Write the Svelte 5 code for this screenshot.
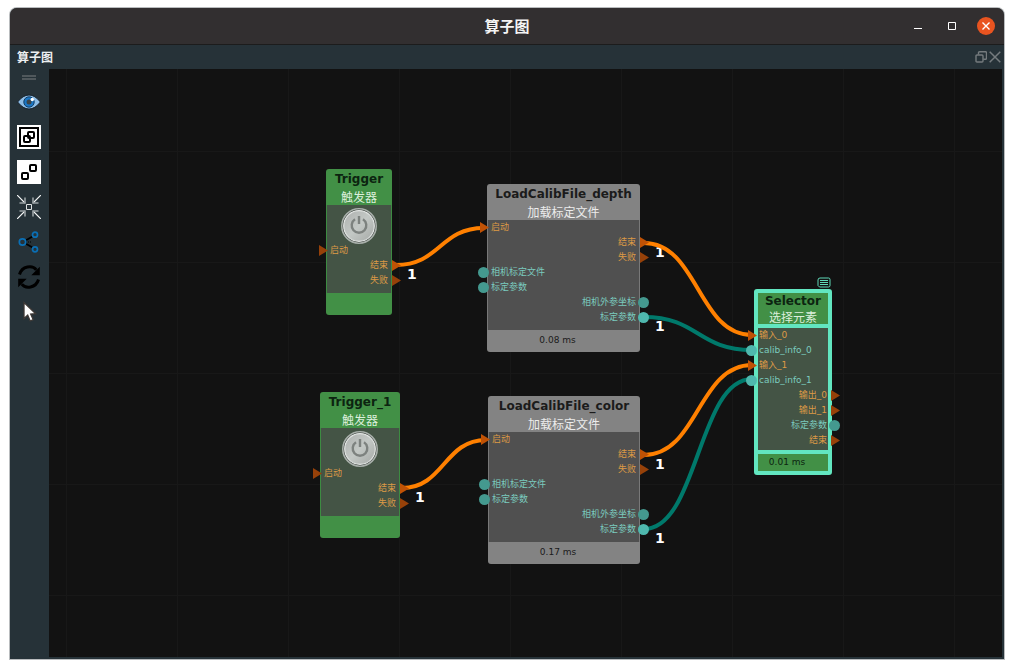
<script>
	// positions are in canvas coordinates
	const nodes = [
		{
			id: 'trigger', title: 'Trigger', subtitle: '触发器', kind: 'green', x: 277, y: 100, width: 66, button: true, time: '',
			ports: [
				{ label: '启动', side: 'in', type: 'flow' },
				{ label: '结束', side: 'out', type: 'flow', linked: true },
				{ label: '失败', side: 'out', type: 'flow' }
			]
		},
		{
			id: 'trigger_1', title: 'Trigger_1', subtitle: '触发器', kind: 'green', x: 271, y: 323, width: 80, button: true, time: '',
			ports: [
				{ label: '启动', side: 'in', type: 'flow' },
				{ label: '结束', side: 'out', type: 'flow', linked: true },
				{ label: '失败', side: 'out', type: 'flow' }
			]
		},
		{
			id: 'depth', title: 'LoadCalibFile_depth', subtitle: '加载标定文件', kind: 'grey', x: 438, y: 115, width: 153, time: '0.08 ms',
			ports: loadPorts()
		},
		{
			id: 'color', title: 'LoadCalibFile_color', subtitle: '加载标定文件', kind: 'grey', x: 439, y: 327, width: 152, time: '0.17 ms',
			ports: loadPorts()
		},
		{
			id: 'selector', title: 'Selector', subtitle: '选择元素', kind: 'green', selected: true, x: 705, y: 220, width: 78, time: '0.01 ms',
			ports: [
				{ label: '输入_0', side: 'in', type: 'flow', linked: true },
				{ label: 'calib_info_0', side: 'in', type: 'data', linked: true },
				{ label: '输入_1', side: 'in', type: 'flow', linked: true },
				{ label: 'calib_info_1', side: 'in', type: 'data', linked: true },
				{ label: '输出_0', side: 'out', type: 'flow' },
				{ label: '输出_1', side: 'out', type: 'flow' },
				{ label: '标定参数', side: 'out', type: 'data' },
				{ label: '结束', side: 'out', type: 'flow' }
			]
		}
	];

	const wires = [
		{ from: [347, 196], to: [435, 159], type: 'flow' },
		{ from: [353, 419], to: [437, 371], type: 'flow' },
		{ from: [595, 174], to: [703, 266], type: 'flow' },
		{ from: [595, 248], to: [703, 281], type: 'data' },
		{ from: [595, 386], to: [703, 296], type: 'flow' },
		{ from: [595, 460], to: [703, 310], type: 'data' }
	];

	const counts = [[358, 210], [366, 433], [606, 188], [606, 262], [606, 400], [606, 474]];

	function loadPorts() {
		return [
			{ label: '启动', side: 'in', type: 'flow', linked: true },
			{ label: '结束', side: 'out', type: 'flow', linked: true },
			{ label: '失败', side: 'out', type: 'flow' },
			{ label: '相机标定文件', side: 'in', type: 'data' },
			{ label: '标定参数', side: 'in', type: 'data' },
			{ label: '相机外参坐标', side: 'out', type: 'data' },
			{ label: '标定参数', side: 'out', type: 'data', linked: true }
		];
	}

	function curve({ from, to }) {
		const mid = (from[0] + to[0]) / 2;
		return `M${from[0]} ${from[1]} C${mid} ${from[1]} ${mid} ${to[1]} ${to[0]} ${to[1]}`;
	}
</script>

<div class="desktop">
	<main class="window">
		<header class="titlebar">
			<h1>算子图</h1>
			<div class="titlebar__buttons">
				<button aria-label="minimize">
					<svg width="18" height="18"><path d="M5 11.5h8" stroke="#fff" /></svg>
				</button>
				<button aria-label="maximize">
					<svg width="18" height="18"><path d="M5.5 5.5h7v7h-7z" fill="none" stroke="#fff" /></svg>
				</button>
				<button aria-label="close">
					<svg width="18" height="18">
						<circle cx="9" cy="9" r="9" fill="#e95420" />
						<path d="M5.500 5.500l7 7m0-7l-7 7" stroke="#fff" stroke-width="1.400" />
					</svg>
				</button>
			</div>
		</header>

		<div class="dock">
			<h2>算子图</h2>
			<div class="dock__buttons">
				<button aria-label="float">
					<svg width="12" height="12" fill="none" stroke="#757b7e" stroke-width="1.400">
						<path d="M3.500 3.500V1.700q0-1 1-1h6q1 0 1 1v5.600q0 1-1 1H8.300" />
						<path d="M1 5q0-1 1-1h5q1 0 1 1v5q0 1-1 1H2q-1 0-1-1z" />
					</svg>
				</button>
				<button aria-label="close dock">
					<svg width="12" height="12" stroke="#757b7e" stroke-width="1.500"><path d="M.7.7l10.600 10.600m0-10.600L.7 11.300" /></svg>
				</button>
			</div>
		</div>

		<div class="workspace">
			<nav class="toolbar">
				<div class="toolbar__handle"></div>
				<button aria-label="view">
					<svg width="24" height="24">
						<path d="M.6 12Q6 5 12 5T23.400 12Q18 19 12 19T.6 12z" fill="#8dbde6" stroke="#17212a" />
						<circle cx="12" cy="12" r="5.200" fill="#1976c5" stroke="#123e66" />
						<circle cx="12" cy="12" r="2.500" fill="#3c4448" />
						<circle cx="15.300" cy="9.500" r="1.700" fill="#fff" />
					</svg>
				</button>
				<button aria-label="group">
					<svg width="24" height="24" fill="none" stroke="#000">
						<path d="M0 0h24v24H0z" fill="#fff" stroke="none" />
						<path d="M3 3h18v18H3z" stroke-width="2" />
						<rect x="11" y="7" width="6" height="6" rx="1" stroke-width="2" />
						<rect x="7" y="11" width="6" height="6" rx="1" stroke-width="2" />
					</svg>
				</button>
				<button aria-label="ungroup">
					<svg width="24" height="24" fill="none" stroke="#000">
						<path d="M0 0h24v24H0z" fill="#fff" stroke="none" />
						<rect x="13" y="5" width="6" height="6" rx="1" stroke-width="2" />
						<rect x="5" y="13" width="6" height="6" rx="1" stroke-width="2" />
					</svg>
				</button>
				<button aria-label="center">
					<svg width="24" height="24" fill="none">
						<path d="M0 0l8 8M24 0l-8 8M0 24l8-8M24 24l-8-8" stroke="#f3f5f5" stroke-width="1.200" />
						<path d="M2.500 8h5.500V2.500M21.500 8H16V2.500M2.500 16h5.500v5.500M21.500 16H16v5.500" stroke="#9ba2a5" stroke-width="1.600" />
						<path d="M9.500 9.500h5v5h-5z" stroke="#dfe2e3" />
					</svg>
				</button>
				<button aria-label="share">
					<svg width="24" height="24" fill="none">
						<path d="M8.500 10.500L15.500 6.500M8.500 13.500L15.500 17.500" stroke="#000" stroke-width="1.800" />
						<path d="M9 12h5" stroke="#000" stroke-dasharray="1 1" />
						<circle cx="5.500" cy="12" r="3.200" stroke="#0a6fb5" stroke-width="1.700" />
						<circle cx="18" cy="4.700" r="2.500" stroke="#0a6fb5" stroke-width="1.700" />
						<circle cx="18" cy="19.300" r="2.500" stroke="#0a6fb5" stroke-width="1.700" />
					</svg>
				</button>
				<button aria-label="refresh">
					<svg width="24" height="24">
						<path d="M2.500 9.500C5 .8 15.500-.2 19.300 4.800M21.500 14.500C19 23.200 8.500 24.200 4.700 19.200" fill="none" stroke="#000" stroke-width="3" />
						<path d="M22.800 1.800v8.500h-8.500zM1.200 22.200v-8.500h8.500z" />
					</svg>
				</button>
				<button aria-label="select">
					<svg width="24" height="24">
						<path d="M7 2.500v16l3.700-3.300 2.500 5.800 3-1.300-2.500-5.600 5-.4z" fill="#fff" stroke="#3d3835" stroke-width="1.300" />
					</svg>
				</button>
			</nav>

			<section class="canvas">
				<svg class="wires" width="100%" height="100%">
					{#each counts as [x, y]}
						<text {x} {y}>1</text>
					{/each}
					{#each wires as wire}
						<path class={wire.type} d={curve(wire)} />
					{/each}
				</svg>

				{#each nodes as node (node.id)}
					<article
						class="node node--{node.kind}"
						class:node--selected={node.selected}
						style="left: {node.x}px; top: {node.y}px; width: {node.width}px"
					>
						{#if node.selected}
							<svg class="node__badge" width="14" height="12" fill="none" stroke="#5fd9b8">
								<path d="M3 1h8.500q1.500 0 1.500 1.500v6q0 1.500-1.500 1.500h-9L1 8.500V3q0-2 2-2z" />
								<path d="M3 3.500h8M3 5.500h8M3 7.500h8" />
							</svg>
						{/if}
						<div class="node__header">
							<h3>{node.title}</h3>
							<p>{node.subtitle}</p>
						</div>
						<div class="node__body">
							{#if node.button}
								<button class="power" aria-label="run {node.title}">
									<svg width="36" height="36" fill="none">
										<defs>
											<linearGradient id="metal-{node.id}" x1="0" y1="0" x2="1" y2="1">
												<stop offset="0" stop-color="#aeb1af" />
												<stop offset=".5" stop-color="#c3c8c5" />
												<stop offset="1" stop-color="#a5a9a6" />
											</linearGradient>
										</defs>
										<circle cx="18" cy="18" r="17.200" fill="#2e3530" stroke="#a9b0ab" stroke-width="1.600" />
										<circle cx="18" cy="18" r="15.300" fill="url(#metal-{node.id})" stroke="#e4e7e5" stroke-width="1.200" />
										<path d="M14 11.300a7.300 7.300 0 1 0 8 0M18 8v8" stroke="#7d827f" stroke-width="2.400" />
									</svg>
								</button>
							{/if}
							{#each node.ports as port}
								<div class="port port--{port.side} port--{port.type}" class:port--linked={port.linked}>
									<span>{port.label}</span>
									<i></i>
								</div>
							{/each}
						</div>
						<div class="node__footer">{node.time}</div>
					</article>
				{/each}
			</section>
		</div>
	</main>
</div>

<style>
	:global(body) {
		margin: 0;
		background: #fff;
	}

	.desktop {
		box-sizing: border-box;
		height: 100vh;
		padding: 8px 10px 10px;
		font-family: "DejaVu Sans", "Noto Sans CJK SC", sans-serif;
	}

	.window {
		display: flex;
		flex-direction: column;
		height: 100%;
		border-radius: 7px 7px 0 0;
		overflow: hidden;
		background: #263238;
		box-shadow: 0 0 0 1px #b9bcbe;
	}

	h1, h2, h3, p {
		margin: 0;
	}

	button {
		display: block;
		padding: 0;
		border: 0;
		background: none;
	}

	svg {
		display: block;
	}

	.titlebar {
		display: grid;
		grid-template-columns: 1fr auto 1fr;
		align-items: center;
		height: 36px;
		border-bottom: 1px solid #1c1c1c;
		background: #322f30;
		color: #f4f4f4;
	}

	.titlebar h1 {
		grid-column: 2;
		font: bold 15px/36px "Noto Sans CJK SC", sans-serif;
	}

	.titlebar__buttons {
		display: flex;
		justify-content: flex-end;
		gap: 16px;
		padding-right: 9px;
	}

	.dock {
		display: flex;
		align-items: center;
		justify-content: space-between;
		height: 24px;
		padding: 0 3px 0 7px;
		color: #eceff1;
	}

	.dock h2 {
		font: bold 12px/24px "Noto Sans CJK SC", sans-serif;
	}

	.dock__buttons {
		display: flex;
		gap: 2px;
	}

	.workspace {
		display: flex;
		flex: 1;
		min-height: 0;
		padding: 0 2px 2px 0;
	}

	.toolbar {
		display: flex;
		flex-direction: column;
		align-items: center;
		gap: 11px;
		width: 38px;
		padding: 6px 1px 0 0;
	}

	.toolbar__handle {
		width: 14px;
		height: 1px;
		margin-bottom: -1px;
		border-top: 2px solid #50585c;
		border-bottom: 2px solid #50585c;
	}

	.canvas {
		position: relative;
		flex: 1;
		overflow: hidden;
		background-color: #121212;
		background-image:
			linear-gradient(90deg, #181818 1px, transparent 1px),
			linear-gradient(#181818 1px, transparent 1px);
		background-size: 111px 111px;
		background-position: 17px 82px;
	}

	.wires {
		position: absolute;
		left: 0;
		top: 0;
	}

	.wires path {
		fill: none;
		stroke-width: 4;
	}

	.wires path.flow {
		stroke: #ff8000;
	}

	.wires path.data {
		stroke: #00796b;
	}

	.wires text {
		fill: #fff;
		font: bold 14px "DejaVu Sans", sans-serif;
	}

	.node {
		--edge: 0px;
		--inset: 4px;
		position: absolute;
		box-sizing: border-box;
		border-radius: 3px;
	}

	.node--green {
		--main: #429046;
		--line: #3d8b42;
		--fill: #445445;
		--title: #0c2410;
		--subtitle: #dcefdc;
	}

	.node--grey {
		--main: #838383;
		--line: #787878;
		--fill: #505050;
		--title: #1b1b1b;
		--subtitle: #ececec;
	}

	.node__header {
		height: 36px;
		border-radius: 3px 3px 0 0;
		background: var(--main);
		text-align: center;
		white-space: nowrap;
	}

	.node__header h3 {
		font-size: 12px;
		line-height: 20px;
		color: var(--title);
	}

	.node__header p {
		font-size: 12px;
		line-height: 18px;
		color: var(--subtitle);
	}

	.node__body {
		padding-bottom: 5px;
		background: var(--fill);
		box-shadow: inset 1px 0 var(--line), inset -1px 0 var(--line);
	}

	.node__footer {
		height: 22px;
		padding-right: 12px;
		border-radius: 0 0 3px 3px;
		background: var(--main);
		color: var(--title);
		font-size: 9px;
		line-height: 20px;
		text-align: center;
	}

	.power {
		box-sizing: border-box;
		height: 38px;
		margin: 0 auto;
		padding-top: 3px;
	}

	.port {
		position: relative;
		display: flex;
		height: 15px;
		padding: 0 var(--inset);
		font-size: 9px;
		line-height: 15px;
		white-space: nowrap;
	}

	.port--out {
		justify-content: flex-end;
	}

	.port--flow {
		color: #dd9a45;
	}

	.port--data {
		color: #7bcbbf;
	}

	.port i {
		position: absolute;
	}

	.port--flow i {
		top: 2px;
		width: 9px;
		height: 11px;
		background: #964109;
		clip-path: polygon(0 0, 100% 50%, 0 100%);
	}

	.port--data i {
		top: 2px;
		width: 11px;
		height: 11px;
		border-radius: 50%;
		background: #44998f;
	}

	.port--flow.port--linked i {
		background: #c05205;
	}

	.port--data.port--linked i {
		background: #4fb8ae;
	}

	.port--in i {
		left: calc(-7px - var(--edge));
	}

	.port--in.port--data i {
		left: calc(-9px - var(--edge));
	}

	.port--out i {
		right: calc(-9px - var(--edge));
	}

	.node--selected {
		--edge: 3px;
		--inset: 1px;
		border: 4px solid #62e6c0;
	}

	.node--selected .node__header {
		height: 31px;
		border-bottom: 4px solid #62e6c0;
		border-radius: 0;
	}

	.node--selected .node__header h3 {
		line-height: 16px;
	}

	.node--selected .node__body {
		padding-bottom: 2px;
		box-shadow: none;
	}

	.node--selected .port {
		line-height: 14px;
	}

	.node--selected .port--data i {
		background: #4fb8ae;
	}

	.node--selected .port--out.port--data i {
		background: #44998f;
	}

	.node--selected .node__footer {
		height: 17px;
		border-top: 4px solid #62e6c0;
		border-radius: 0;
		line-height: 16px;
	}

	.node__badge {
		position: absolute;
		right: -3px;
		top: -16px;
	}
</style>
